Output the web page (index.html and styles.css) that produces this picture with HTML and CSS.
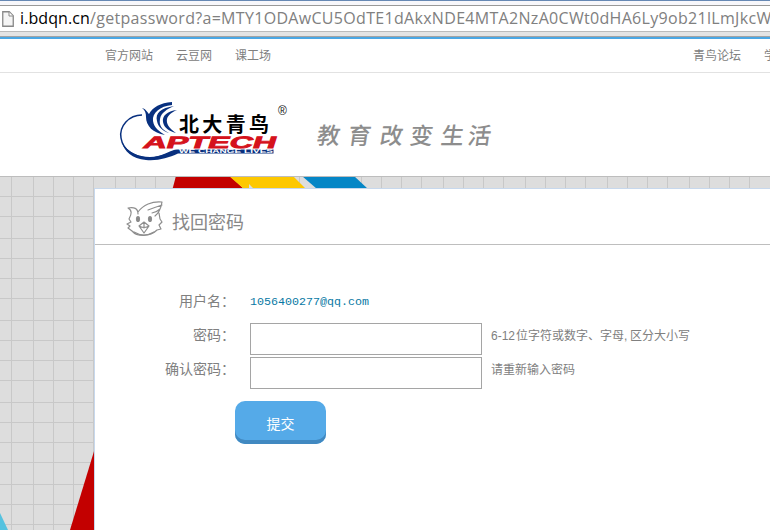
FILE: index.html
```
<!DOCTYPE html>
<html lang="zh-CN">
<head>
<meta charset="utf-8">
<title>找回密码</title>
<link rel="stylesheet" href="styles.css">
</head>
<body>
<div class="browser">
  <div class="address">
    <svg class="page-icon" width="12" height="16" viewBox="0 0 12 16"><path d="M.75.75h6.5l4 4v10.5H.75z" fill="#f5f5f5" stroke="#888" stroke-width="1.3"/><path d="M7 1v4h4" fill="#fff" stroke="#888"/></svg>
    <span class="url"><span class="host">i.bdqn.cn</span><span class="path">/getpassword?a=MTY1ODAwCU5OdTE1dAkxNDE4MTA2NzA0CWt0dHA6Ly9ob21lLmJkcW</span></span>
  </div>
</div>
<nav class="topnav">
  <div class="links"><a>官方网站</a><a>云豆网</a><a>课工场</a></div>
  <div class="links right"><a>青鸟论坛</a><a>学</a></div>
</nav>
<header class="header">
  <svg width="400" height="80" viewBox="110 90 400 80">
    <path d="M142 115C129 115 119 126 121 138C123 151 136 158 149 158C160 158 168 154 175 151" fill="none" stroke="#08307f" stroke-width="1.500"/>
    <path d="M122 142C128 155 146 159 158 156C166 154 171 150 177 149.500H273.500V153.500H178C168 158 158 161 146 160C132 159 124 151 122 142Z" fill="#08307f"/>
    <g fill="#08307f">
      <path d="M142 108C146 109 147 112 149 114C153 107 160 103 172 102V105C160 106 152 113 153 121C154 128 160 132 165 135C153 133 146 126 146 117C146 113 145 110 142 108Z"/>
      <path d="M174 106C161 108 155 113 157 121C158 127 163 131 169 133C161 129 159 125 160 119C161 113 167 109 174 106Z"/>
      <path d="M177 110C167 111 162 116 163 122C164 128 169 131 176 133C169 128 166 124 167 119C168 115 172 112 177 110Z"/>
    </g>
    <text class="brand-cn" x="179" y="131.500" textLength="90">北大青鸟</text>
    <text class="brand-en" transform="translate(142 147.500) skewX(-18)" textLength="133" lengthAdjust="spacingAndGlyphs">APTECH</text>
    <text class="brand-sub" x="179" y="153.300" textLength="94" lengthAdjust="spacingAndGlyphs">WE CHANGE LIVES</text>
    <text class="registered" x="278" y="115">®</text>
    <g class="slogan">
      <text transform="translate(316 144) skewX(-8)">教</text><text transform="translate(347 144) skewX(-8)">育</text><text transform="translate(379 144) skewX(-8)">改</text><text transform="translate(409 144) skewX(-8)">变</text><text transform="translate(440 144) skewX(-8)">生</text><text transform="translate(467 144) skewX(-8)">活</text>
    </g>
  </svg>
</header>
<main class="stage">
  <svg class="backdrop" width="770" height="354" viewBox="0 176 770 354">
    <defs><pattern id="grid" width="82" height="82" patternUnits="userSpaceOnUse" x="11" y="196">
      <path d="M.5 0V82M22.5 0V82M42.5 0V82M62.5 0V82M0 .5H82M0 20.5H82M0 42.5H82M0 62.5H82" stroke="#c8c8c8"/>
    </pattern></defs>
    <path d="M0 176h770v354H0z" fill="#dddddd"/>
    <path d="M0 176h770v354H0z" fill="url(#grid)"/>
    <path d="M176 176h54l14 13h-71.500z" fill="#c30000"/>
    <path d="M229 176h64l13 13h-52l-5-5v5h-5z" fill="#fdc800"/>
    <path d="M302 176h52l14 13h-51z" fill="#0586c6"/>
    <path d="M95 448v82H70z" fill="#c30000"/>
    <path d="M0 513l8 17H0z" fill="#55c2df"/>
    <path d="M0 176.500h770" stroke="#bdbdbd"/>
  </svg>
  <section class="panel">
    <div class="panel-head">
      <svg width="38" height="38" viewBox="126 200 38 38" fill="none" stroke="#8e8e8e" stroke-width="1.2" stroke-linejoin="round" stroke-linecap="round">
        <path d="M138 212C143 205 152 201 162 202C161 208 159 213 155 216M148 210Q156 207 162 205M152 213Q157 212 160 209M138 214C138 208 134 207 128 208C132 210 132 214 129 219L131 222L127 224L130 226L128 228L132 231C137 237 150 237 157 230L161 229L159 225L162 222L160 219L159 213"/>
        <path d="M134 232Q144 238 154 232M139 226l5-4 5 4-5 7zM139 226q5 3 10 0M144 222v6"/>
        <ellipse cx="138" cy="219" rx="1.500" ry="2.500" fill="#888"/><ellipse cx="150" cy="219" rx="1.500" ry="2.500" fill="#888"/>
      </svg>
      <h1>找回密码</h1>
    </div>
    <form class="form">
      <div class="row user"><label>用户名：</label><span class="email">1056400277@qq.com</span></div>
      <div class="row"><label>密码：</label><input type="password"><span class="hint"><span class="range">6-12</span>位字符或数字<span class="mark">、</span>字母<span class="comma">,</span>区分大小写</span></div>
      <div class="row"><label>确认密码：</label><input type="password"><span class="hint">请重新输入密码</span></div>
      <button type="button">提交</button>
    </form>
  </section>
</main>
</body>
</html>
```
FILE: styles.css
```
* { box-sizing: border-box; }
body { margin: 0; width: 770px; height: 530px; overflow: hidden; background: #fff; font: 12px/16px "Liberation Sans", "Noto Sans CJK SC", sans-serif; color: #808080; }
svg { display: block; flex: none; }
.browser { height: 39px; padding-top: 4px; border-top: 1px solid #6688b4; border-bottom: 2px solid #4ba7e4; background: linear-gradient(#f7f7fb 0 30px, #e4e4e4 30px 35px, #a3a3a3 35px); }
.address { display: flex; align-items: center; height: 27px; border-top: 1px solid #999; border-bottom: 1px solid #bbb; background: #fff; overflow: hidden; }
.page-icon { margin-left: 2px; }
.url { display: flex; margin-left: 6px; font: 16px/24px "Open Sans", sans-serif; white-space: nowrap; position: relative; top: -1px; }
.host { color: #000; width: 70px; letter-spacing: .1px; }
.path { color: #808080; letter-spacing: .31px; }
.topnav { display: flex; justify-content: space-between; height: 34px; padding: 9px 0 0 105px; border-bottom: 1px solid #e2e2e2; overflow: hidden; }
.links { display: flex; gap: 23px; white-space: nowrap; }
.right { width: 77px; flex: none; }
.header { height: 103px; padding: 17px 0 0 110px; }
.brand-cn { font: 700 20px "Noto Sans CJK SC", sans-serif; fill: #000; }
.brand-en { font: bold 16.5px "Liberation Sans", sans-serif; fill: #d5121c; stroke: #d5121c; stroke-width: .8px; }
.brand-sub { font: bold 4.8px "Liberation Sans", sans-serif; fill: #fff; }
.registered { font: 12px "Liberation Sans", sans-serif; fill: #111; }
.slogan { font: 500 23px "Noto Sans CJK SC", sans-serif; fill: #8d8d8d; }
.stage { position: relative; height: 354px; padding: 12px 0 0 94px; }
.backdrop { position: absolute; left: 0; top: 0; }
.panel { position: relative; height: 342px; background: #fff; border: solid #c7d8ed; border-width: 1px 0 0 1px; }
.panel-head { display: flex; height: 56px; padding: 11px 0 0 31px; border-bottom: 1px solid #bebebe; }
h1 { margin: 9px 0 0 8px; font: 18px/24px "Noto Sans CJK SC", sans-serif; color: #888; }
.form { padding-top: 46px; }
.row { display: flex; height: 34px; }
.row.user { height: 32px; }
label { width: 140px; flex: none; margin-right: 15px; text-align: right; font-size: 14px; line-height: 20px; white-space: nowrap; }
.row:not(.user) label { padding-top: 2px; }
.email { color: #0878a4; font: 11.67px/20px "Liberation Mono", monospace; padding-top: 1px; }
input { width: 232px; height: 32px; padding: 0 6px; border: 1px solid #a5a5a5; background: #fff; }
.hint { display: flex; margin-left: 9px; padding-top: 5px; white-space: nowrap; }
.range { width: 25px; }
.mark { width: 12px; }
.comma { width: 6px; }
button { display: block; width: 91px; height: 43px; margin: 10px 0 0 140px; padding: 1px 0 0; border: 0; border-radius: 10px; background: #55aae8; box-shadow: inset 0 -4px #4189c1; color: #fff; font: 14px/20px "Noto Sans CJK SC", sans-serif; }
```
